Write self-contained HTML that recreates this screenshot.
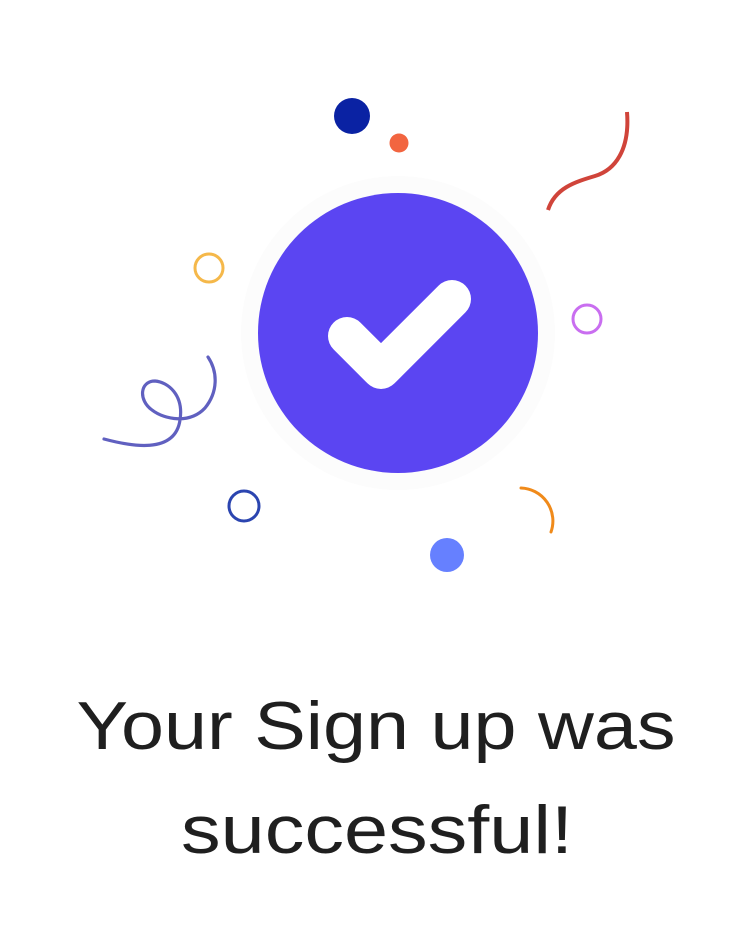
<!DOCTYPE html>
<html><head><meta charset="utf-8"><style>
html,body{margin:0;padding:0;background:#fff;width:752px;height:938px;overflow:hidden}
svg{display:block}
</style></head><body>
<svg width="752" height="938" viewBox="0 0 752 938" xmlns="http://www.w3.org/2000/svg">
<circle cx="398" cy="333" r="157" fill="#fcfcfc"/>
<circle cx="398" cy="333" r="140" fill="#5b45f2"/>
<path d="M347 336 L381 370 L452 299" fill="none" stroke="#fff" stroke-width="38" stroke-linecap="round" stroke-linejoin="round"/>
<circle cx="352" cy="116" r="18" fill="#0a22a3"/>
<circle cx="399" cy="143" r="9.5" fill="#f26540"/>
<path d="M627 112 C630 150 615 170 595 176 C575 182 555 188 548 210" fill="none" stroke="#d0443a" stroke-width="4"/>
<circle cx="209" cy="268" r="14" fill="none" stroke="#f5b84a" stroke-width="3"/>
<circle cx="587" cy="319" r="14" fill="none" stroke="#c96ef0" stroke-width="3"/>
<path d="M104 439 C130 446 175 455 180 420 C184 395 168 382 155 381 C140 381 138 400 152 410 C165 420 190 424 205 408 C218 392 218 372 208 357" fill="none" stroke="#6060c0" stroke-width="3.2" stroke-linecap="round"/>
<circle cx="244" cy="506" r="15" fill="none" stroke="#2b45b0" stroke-width="3"/>
<path d="M521 488 A33 33 0 0 1 551 532" fill="none" stroke="#f08a1a" stroke-width="3" stroke-linecap="round"/>
<circle cx="447" cy="555" r="17" fill="#6680ff"/>
<text x="376" y="749" text-anchor="middle" font-family="Liberation Sans, sans-serif" font-size="68" fill="#1f1f1f" textLength="599" lengthAdjust="spacingAndGlyphs">Your Sign up was</text>
<text x="377" y="853" text-anchor="middle" font-family="Liberation Sans, sans-serif" font-size="68" fill="#1f1f1f" textLength="392" lengthAdjust="spacingAndGlyphs">successful!</text>
</svg>
</body></html>
